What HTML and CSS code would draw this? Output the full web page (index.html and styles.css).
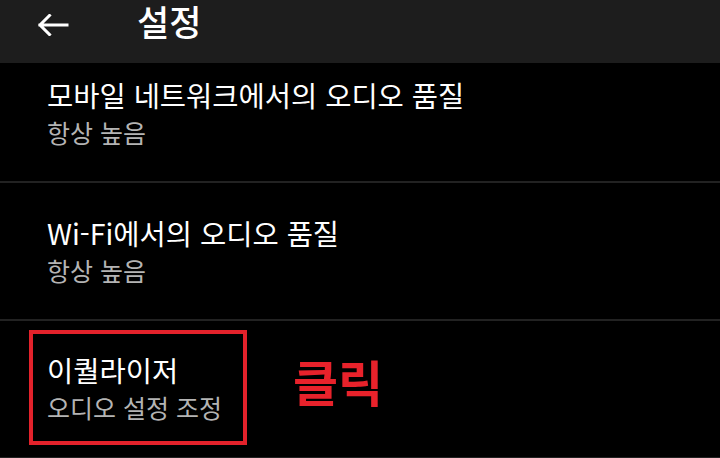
FILE: index.html
```html
<!DOCTYPE html>
<html lang="ko">
<head>
<meta charset="utf-8">
<title>설정</title>
<link rel="stylesheet" href="styles.css">
</head>
<body>
<div class="screen">
  <header class="appbar">
    <span class="back" aria-label="뒤로">
      <svg width="32" height="22" viewBox="0 0 32 22"><path d="M30 11H3M12.5 1.5L3 11l9.5 9.5" fill="none" stroke="#fff" stroke-width="3" stroke-linecap="square"/></svg>
    </span>
    <h1 class="title">설정</h1>
  </header>
  <main class="list">
    <div class="row first">
      <div class="text">
        <div class="primary">모바일 네트워크에서의 오디오 품질</div>
        <div class="secondary">항상 높음</div>
      </div>
    </div>
    <div class="row">
      <div class="text">
        <div class="primary">Wi-Fi에서의 오디오 품질</div>
        <div class="secondary">항상 높음</div>
      </div>
    </div>
    <div class="row marked">
      <div class="highlight">
        <div class="primary">이퀄라이저</div>
        <div class="secondary">오디오 설정 조정</div>
      </div>
      <span class="click-label">클릭</span>
    </div>
  </main>
</div>
</body>
</html>
```
FILE: styles.css
```css
html, body {
  margin: 0;
  padding: 0;
  background: #000;
}
body {
  font-family: "Noto Sans CJK KR", "Noto Sans", sans-serif;
  color: #fff;
}
.screen {
  width: 720px;
  height: 458px;
  overflow: hidden;
  display: flex;
  flex-direction: column;
}
.appbar {
  height: 63px;
  flex: none;
  background: #1d1d1d;
  display: flex;
  align-items: flex-start;
}
.back {
  display: flex;
  margin: 14px 0 0 37px;
}
.title {
  margin: 2px 0 0 68px;
  font-size: 35px;
  font-weight: 500;
  line-height: 38px;
}
.list {
  flex: 1;
  display: flex;
  flex-direction: column;
}
.row {
  height: 136px;
  flex: none;
  border-bottom: 2px solid #222;
  display: flex;
  align-items: center;
  padding-left: 47px;
}
.row.first {
  margin-top: -18px;
}
.primary {
  font-size: 28.5px;
  line-height: 36px;
  color: #fff;
}
.secondary {
  font-size: 25px;
  line-height: 34px;
  color: #b4b4b4;
  margin-top: 2px;
}
.row.marked {
  padding-left: 29px;
  align-items: flex-start;
}
.highlight {
  margin-top: 9px;
  width: 196px;
  height: 107px;
  border: 4px solid #e3222b;
  padding-left: 14px;
  display: flex;
  flex-direction: column;
  justify-content: center;
}
.click-label {
  margin: 30px 0 0 46px;
  font-size: 49px;
  font-weight: 700;
  line-height: 60px;
  color: #e8222b;
}
```
